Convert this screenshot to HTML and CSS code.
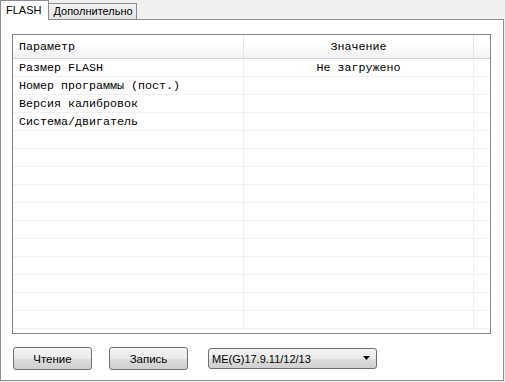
FILE: index.html
```html
<!DOCTYPE html>
<html lang="ru">
<head>
	<meta charset="UTF-8" />
	<title>FLASH</title>
	<link rel="stylesheet" href="styles.css">
</head>
<body>
	<div class="tabs">
		<div class="tab-title">
			<span class="active">FLASH</span>
			<span>Дополнительно</span>
		</div>
		<div class="tab-con">
			<div class="grid">
				<div class="row head">
					<div class="c1">Параметр</div>
					<div class="c2">Значение</div>
					<div class="c3"></div>
				</div>
				<div class="row"><div class="c1">Размер FLASH</div><div class="c2">Не загружено</div><div class="c3"></div></div>
				<div class="row"><div class="c1">Номер программы (пост.)</div><div class="c2"></div><div class="c3"></div></div>
				<div class="row"><div class="c1">Версия калибровок</div><div class="c2"></div><div class="c3"></div></div>
				<div class="row"><div class="c1">Система/двигатель</div><div class="c2"></div><div class="c3"></div></div>
				<div class="row"><div class="c1"></div><div class="c2"></div><div class="c3"></div></div>
				<div class="row"><div class="c1"></div><div class="c2"></div><div class="c3"></div></div>
				<div class="row"><div class="c1"></div><div class="c2"></div><div class="c3"></div></div>
				<div class="row"><div class="c1"></div><div class="c2"></div><div class="c3"></div></div>
				<div class="row"><div class="c1"></div><div class="c2"></div><div class="c3"></div></div>
				<div class="row"><div class="c1"></div><div class="c2"></div><div class="c3"></div></div>
				<div class="row"><div class="c1"></div><div class="c2"></div><div class="c3"></div></div>
				<div class="row"><div class="c1"></div><div class="c2"></div><div class="c3"></div></div>
				<div class="row"><div class="c1"></div><div class="c2"></div><div class="c3"></div></div>
				<div class="row"><div class="c1"></div><div class="c2"></div><div class="c3"></div></div>
				<div class="row"><div class="c1"></div><div class="c2"></div><div class="c3"></div></div>
			</div>
			<div class="controls">
				<button class="btn">Чтение</button>
				<button class="btn">Запись</button>
				<div class="combo">
					<span>ME(G)17.9.11/12/13</span>
					<svg width="8" height="5" viewBox="0 0 8 5"><path d="M0 0H7L3.5 4Z" fill="#000"/></svg>
				</div>
			</div>
		</div>
	</div>
</body>
</html>
```

FILE: styles.css
```css
*{padding: 0;margin: 0;box-sizing: border-box;}
body{background: #f0f0f0;font-family: "Liberation Sans", Tahoma, sans-serif;font-size: 11px;color: #000;width: 505px;height: 382px;overflow: hidden;}

.tabs{width: 504px;}
.tab-title{display: flex;align-items: flex-end;height: 19px;padding-left: 1px;}
.tab-title span{height: 16px;line-height: 15px;padding: 0 3px 0 4px;border: 1px solid #898c95;border-bottom: none;background: linear-gradient(#f3f3f3, #e3e3e3);margin-left: -1px;}
.tab-title span.active{background: #fff;position: relative;z-index: 1;margin-bottom: -1px;height: 20px;line-height: 18px;padding: 0 7px 0 5px;}

.tab-con{border: 1px solid #898c95;background: #fff;height: 362px;padding: 14px 11px 0 11px;}

.grid{border: 1px solid #828790;height: 300px;width: 479px;overflow: hidden;font-family: "Liberation Mono", "Courier New", monospace;font-size: 11.66px;}
.row{display: flex;height: 18px;border-bottom: 1px solid #f0f0f0;}
.row div{line-height: 19px;white-space: nowrap;}
.c1{width: 231px;padding-left: 6px;border-right: 1px solid #f0f0f0;}
.c2{width: 230px;text-align: center;border-right: 1px solid #f0f0f0;}
.c3{flex: 1;}
.row.head{height: 24px;background: linear-gradient(#fff, #fff 40%, #f1f2f4);border-bottom: 1px solid #d5d5d5;}
.row.head div{line-height: 24px;border-right-color: #e5e5e5;}

.controls{display: flex;align-items: center;margin-top: 13px;padding-left: 1px;}
.btn{width: 79px;height: 23px;font-family: "Liberation Sans", Tahoma, sans-serif;font-size: 11.5px;border: 1px solid #707070;border-radius: 3px;background: linear-gradient(#f2f2f2, #ebebeb 50%, #dddddd 51%, #cfcfcf);margin-right: 17px;}
.combo{display: flex;align-items: center;justify-content: space-between;width: 169px;height: 21px;margin-left: 3px;padding: 0 5px 0 3px;border: 1px solid #707070;border-radius: 3px;background: linear-gradient(#f2f2f2, #ebebeb 50%, #dddddd 51%, #cfcfcf);}
```
